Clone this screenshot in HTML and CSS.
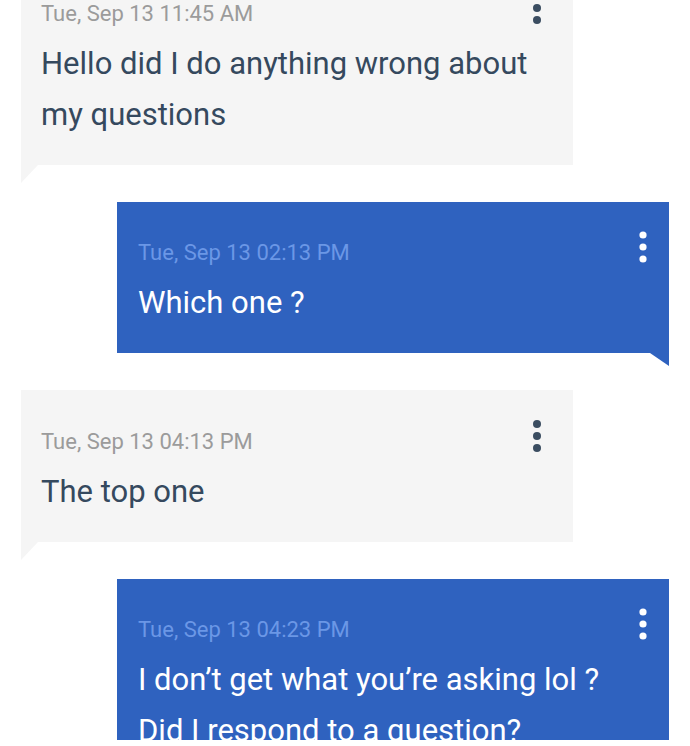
FILE: index.html
```html
<!DOCTYPE html>
<html lang="en">
<head>
<meta charset="utf-8">
<title>Messages</title>
<link rel="stylesheet" href="styles.css">
</head>
<body>
<div class="screen">
  <div class="thread">
    <div class="bubble in">
      <div class="head">
        <span class="time">Tue, Sep 13 11:45 AM</span>
        <svg class="kebab" viewBox="0 0 8 32" width="8" height="32"><circle cx="4" cy="4" r="4"/><circle cx="4" cy="16" r="4"/><circle cx="4" cy="28" r="4"/></svg>
      </div>
      <p class="text">Hello did I do anything wrong about my questions</p>
    </div>
    <div class="bubble out">
      <div class="head">
        <span class="time">Tue, Sep 13 02:13 PM</span>
        <svg class="kebab" viewBox="0 0 8 32" width="8" height="32"><circle cx="4" cy="4" r="3.6"/><circle cx="4" cy="16" r="3.6"/><circle cx="4" cy="28" r="3.6"/></svg>
      </div>
      <p class="text">Which one ?</p>
    </div>
    <div class="bubble in">
      <div class="head">
        <span class="time">Tue, Sep 13 04:13 PM</span>
        <svg class="kebab" viewBox="0 0 8 32" width="8" height="32"><circle cx="4" cy="4" r="4"/><circle cx="4" cy="16" r="4"/><circle cx="4" cy="28" r="4"/></svg>
      </div>
      <p class="text">The top one</p>
    </div>
    <div class="bubble out">
      <div class="head">
        <span class="time">Tue, Sep 13 04:23 PM</span>
        <svg class="kebab" viewBox="0 0 8 32" width="8" height="32"><circle cx="4" cy="4" r="3.6"/><circle cx="4" cy="16" r="3.6"/><circle cx="4" cy="28" r="3.6"/></svg>
      </div>
      <p class="text">I don’t get what you’re asking lol ?<br>Did I respond to a question?</p>
    </div>
  </div>
</div>
</body>
</html>
```
FILE: styles.css
```css
html, body {
  margin: 0;
  padding: 0;
  background: #ffffff;
}

body {
  width: 690px;
  height: 746px;
  font-family: Roboto, "Liberation Sans", sans-serif;
  overflow: hidden;
}

.screen {
  height: 740px;
  overflow: hidden;
}

.thread {
  display: flex;
  flex-direction: column;
  gap: 37px;
  margin-top: -38px;
}

.bubble {
  position: relative;
  width: 552px;
  box-sizing: border-box;
  padding: 29.5px 32px 25px 20px;
}

.bubble.in {
  align-self: flex-start;
  margin-left: 21px;
  background: #f5f5f5;
}

.bubble.out {
  align-self: flex-start;
  margin-left: 117px;
  background: #2f62bf;
  padding-left: 21px;
  padding-right: 22px;
}

.bubble.in::after {
  content: "";
  position: absolute;
  left: 0;
  top: 100%;
  border-top: 18px solid #f5f5f5;
  border-right: 17px solid transparent;
}

.bubble.out::after {
  content: "";
  position: absolute;
  right: 0;
  top: 100%;
  border-top: 13px solid #2f62bf;
  border-left: 19px solid transparent;
}

.head {
  display: flex;
  justify-content: space-between;
  align-items: flex-start;
}

.time {
  margin-top: 7px;
  font-size: 22px;
  line-height: 30px;
}

.in .time { color: #9b9b9b; }
.out .time { color: #6b97e6; }

.kebab { display: block; }
.in .kebab { fill: #3b4d61; }
.out .kebab { fill: #ffffff; }

.text {
  margin: 9px 0 0;
  font-size: 31px;
  line-height: 51px;
}

.in .text { color: #35495e; }
.out .text { color: #ffffff; }
```
